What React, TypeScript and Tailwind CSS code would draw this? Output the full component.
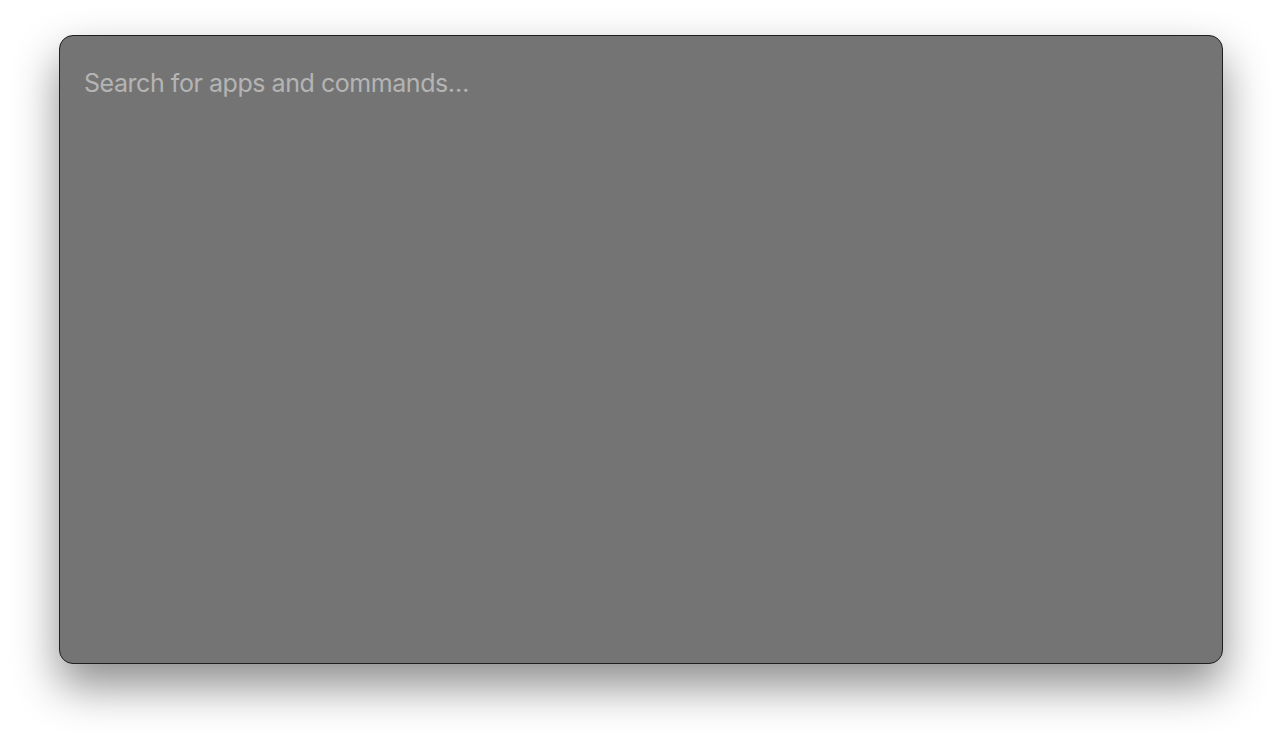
export default function App() {
  return (
    <div className="w-full h-[747px] bg-white pt-[35px] pl-[59px] pr-[59px]">
      <div className="h-[629px] rounded-[14px] border border-[#1f1f1f] bg-[#747474] shadow-[0_22px_45px_rgba(0,0,0,0.45)] overflow-hidden">
        <input
          type="text"
          placeholder="Search for apps and commands…"
          className="w-full h-[94px] px-6 bg-transparent outline-none text-[25px] text-white placeholder:text-[#b4b4b4] font-['Inter',sans-serif] tracking-[-0.45px]"
        />
      </div>
    </div>
  );
}
